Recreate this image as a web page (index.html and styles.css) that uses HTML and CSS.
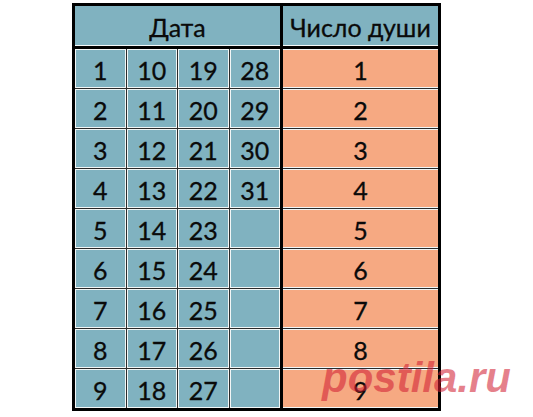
FILE: index.html
```html
<!DOCTYPE html>
<html lang="ru">
<head>
<meta charset="utf-8">
<title>Число души</title>
<link rel="stylesheet" href="styles.css">
</head>
<body>
<div class="sheet">
  <div class="table">
    <div class="block date-block">
      <div class="head">Дата</div>
      <div class="body date-grid">
        <div class="cell">1</div><div class="cell">10</div><div class="cell">19</div><div class="cell">28</div>
        <div class="cell">2</div><div class="cell">11</div><div class="cell">20</div><div class="cell">29</div>
        <div class="cell">3</div><div class="cell">12</div><div class="cell">21</div><div class="cell">30</div>
        <div class="cell">4</div><div class="cell">13</div><div class="cell">22</div><div class="cell">31</div>
        <div class="cell">5</div><div class="cell">14</div><div class="cell">23</div><div class="cell"></div>
        <div class="cell">6</div><div class="cell">15</div><div class="cell">24</div><div class="cell"></div>
        <div class="cell">7</div><div class="cell">16</div><div class="cell">25</div><div class="cell"></div>
        <div class="cell">8</div><div class="cell">17</div><div class="cell">26</div><div class="cell"></div>
        <div class="cell">9</div><div class="cell">18</div><div class="cell">27</div><div class="cell"></div>
      </div>
    </div>
    <div class="block soul-block">
      <div class="head">Число души</div>
      <div class="body soul-grid">
        <div class="cell">1</div>
        <div class="cell">2</div>
        <div class="cell">3</div>
        <div class="cell">4</div>
        <div class="cell">5</div>
        <div class="cell">6</div>
        <div class="cell">7</div>
        <div class="cell">8</div>
        <div class="cell">9</div>
      </div>
    </div>
  </div>
  <div class="watermark">postila.ru</div>
</div>
</body>
</html>
```

FILE: styles.css
```css
html, body {
  margin: 0;
  padding: 0;
  background: #ffffff;
}

body {
  width: 533px;
  height: 417px;
  overflow: hidden;
  font-family: Lato, "Open Sans", sans-serif;
  color: #0a0a0a;
}

.sheet {
  position: relative;
  width: 533px;
  height: 417px;
  padding-top: 3px;
  padding-left: 72px;
  box-sizing: border-box;
}

.table {
  display: flex;
  gap: 3px;
  width: fit-content;
  border: 3px solid #000;
  background: #000;
}

.block {
  display: flex;
  flex-direction: column;
  gap: 3px;
}

.date-block {
  width: 205px;
}

.soul-block {
  width: 155px;
}

.head {
  height: 40px;
  box-sizing: border-box;
  background: #80b2c0;
  border-bottom: 1px solid #f4f8f8;
  display: flex;
  align-items: center;
  justify-content: center;
  font-size: 25px;
  line-height: 1;
  padding-top: 3px;
  -webkit-text-stroke: 0.3px #0a0a0a;
}

.body {
  display: grid;
  gap: 1px;
  background: #2b2b2b;
  grid-template-rows: repeat(9, 39px);
}

.date-grid {
  grid-template-columns: repeat(4, 1fr);
}

.soul-grid {
  grid-template-columns: 1fr;
}

.cell {
  box-sizing: border-box;
  border: 1px solid #f2f6f6;
  display: flex;
  align-items: center;
  justify-content: center;
  font-size: 25px;
  line-height: 1;
  padding-top: 4px;
  -webkit-text-stroke: 0.3px #0a0a0a;
}

.date-grid .cell {
  background: #80b2c0;
}

.soul-grid .cell {
  background: #f6a982;
  border-left: none;
  border-right: none;
}

.watermark {
  position: absolute;
  left: 322px;
  top: 357px;
  font-family: "Liberation Sans", Arial, sans-serif;
  font-weight: bold;
  font-style: italic;
  font-size: 42px;
  line-height: 1;
  color: rgba(210, 30, 50, 0.56);
  white-space: nowrap;
}
```
